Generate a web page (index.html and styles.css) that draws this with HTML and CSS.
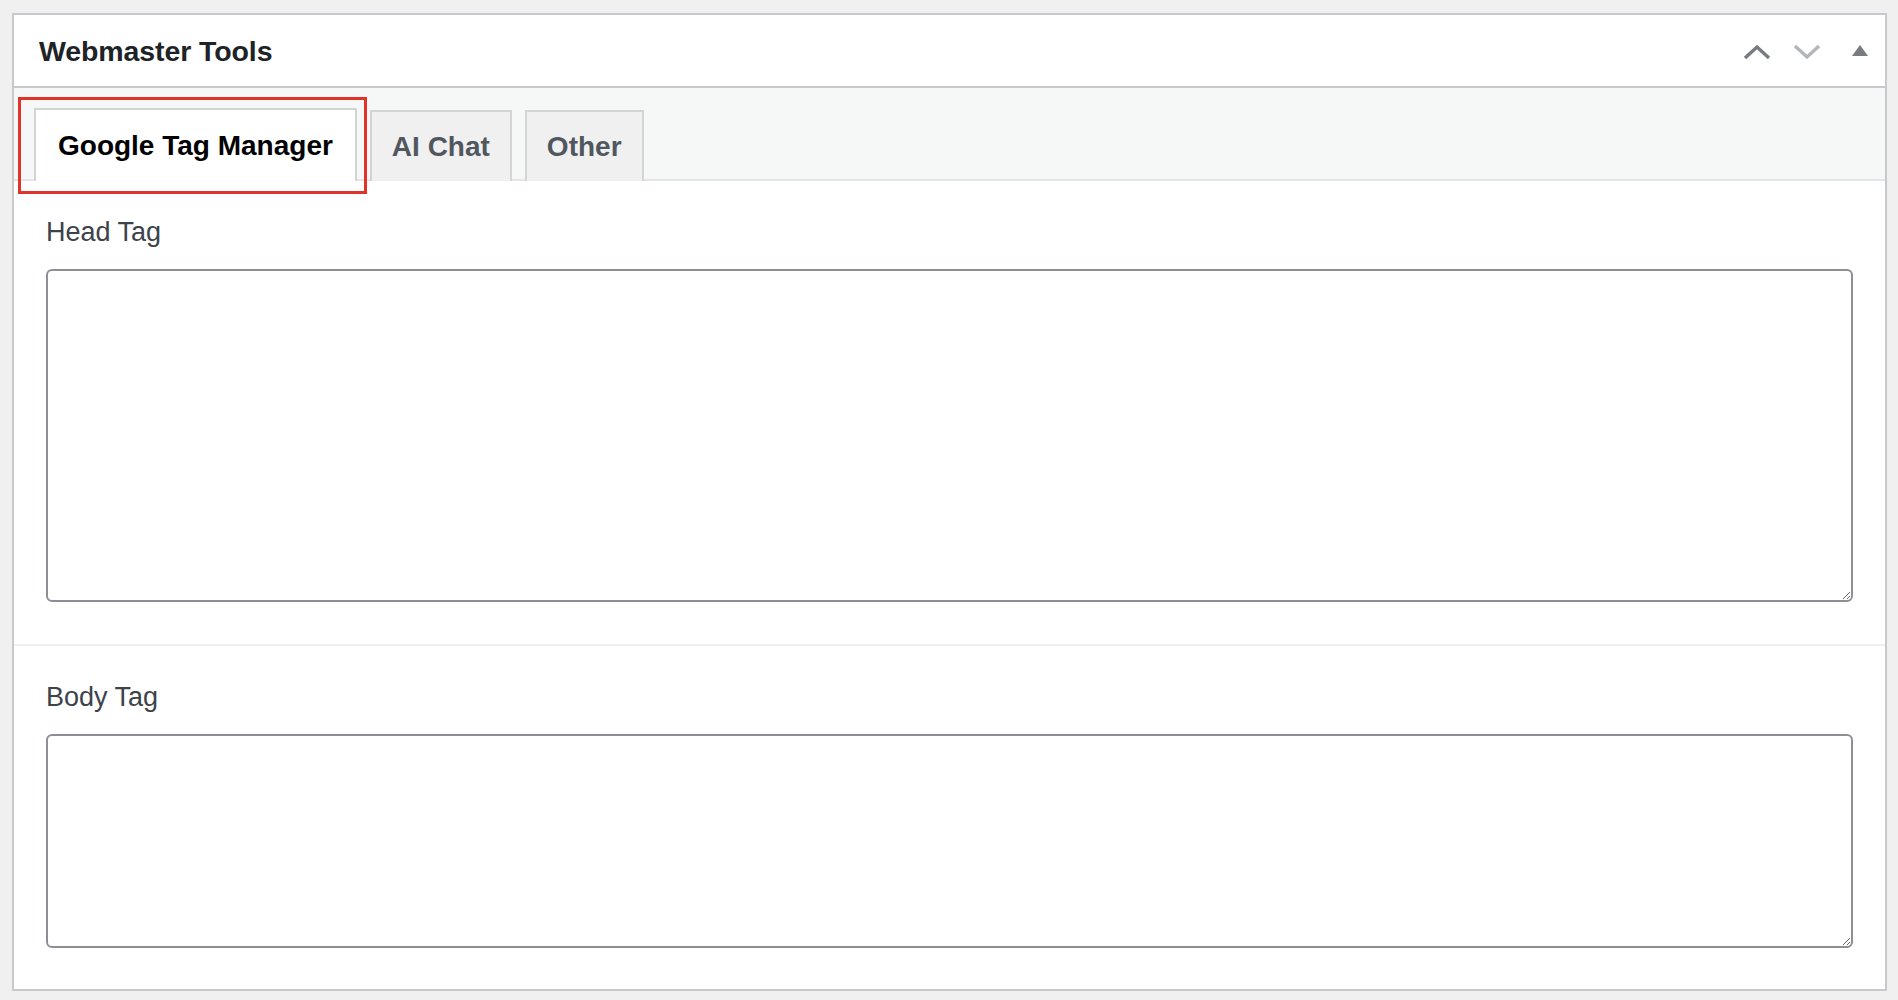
FILE: index.html
```html
<!DOCTYPE html>
<html lang="en">
<head>
    <meta charset="UTF-8">
    <meta name="viewport" content="width=device-width, initial-scale=1.0">
    <title>Webmaster Tools</title>
    <link rel="stylesheet" href="styles.css">
</head>
<body>
    <div class="postbox">
        <div class="postbox-header">
            <h2 class="postbox-title">Webmaster Tools</h2>
            <div class="handle-actions">
                <button class="handle-btn" type="button" aria-label="Move up">
                    <svg width="28" height="16" viewBox="0 0 28 16"><path d="M2 14 L14 3 L26 14" fill="none" stroke="#787c82" stroke-width="3.5"/></svg>
                </button>
                <button class="handle-btn" type="button" aria-label="Move down">
                    <svg width="28" height="16" viewBox="0 0 28 16"><path d="M2 2 L14 13 L26 2" fill="none" stroke="#b4b7ba" stroke-width="3.5"/></svg>
                </button>
                <button class="handle-btn toggle" type="button" aria-label="Toggle panel">
                    <svg width="16" height="11" viewBox="0 0 16 11"><path d="M8 0 L16 11 L0 11 Z" fill="#787c82"/></svg>
                </button>
            </div>
        </div>

        <div class="tab-bar">
            <div class="tab active">Google Tag Manager</div>
            <div class="tab">AI Chat</div>
            <div class="tab">Other</div>
            <!-- annotation drawn over the active tab -->
            <div class="highlight"></div>
        </div>

        <div class="field">
            <label for="headTag">Head Tag</label>
            <textarea id="headTag" class="code-box tall"></textarea>
        </div>

        <div class="field">
            <label for="bodyTag">Body Tag</label>
            <textarea id="bodyTag" class="code-box short"></textarea>
        </div>
    </div>
</body>
</html>
```

FILE: styles.css
```css
body {
    margin: 0;
    padding: 13px 11px 8px 12px;
    background-color: #f0f0f1;
    font-family: 'Liberation Sans', Arial, sans-serif;
}

.postbox {
    background-color: #fff;
    border: 2px solid #c8c9cc;
    height: 978px;
    box-sizing: border-box;
}

.postbox-header {
    display: flex;
    align-items: center;
    justify-content: space-between;
    height: 73px;
    box-sizing: border-box;
    border-bottom: 2px solid #c8c9cc;
    padding: 2px 17px 0 25px;
}

.postbox-title {
    margin: 0;
    font-size: 28.5px;
    font-weight: bold;
    color: #1d2327;
    letter-spacing: -0.1px;
}

.handle-actions {
    display: flex;
    align-items: center;
    gap: 22px;
}

.handle-btn {
    border: none;
    background: none;
    padding: 0;
    display: flex;
    align-items: center;
}

.handle-btn.toggle {
    margin-left: 9px;
    margin-bottom: 2px;
}

.tab-bar {
    position: relative;
    display: flex;
    gap: 13px;
    align-items: flex-end;
    background-color: #f6f7f7;
    border-bottom: 2px solid #e4e5e7;
    padding: 21px 0 0 20px;
    height: 93px;
    box-sizing: border-box;
}

.tab {
    height: 71px;
    box-sizing: border-box;
    display: flex;
    align-items: center;
    padding: 0 20px;
    margin-bottom: -2px;
    background-color: #f0f0f1;
    border: 2px solid #d3d4d6;
    border-bottom: none;
    font-size: 28px;
    font-weight: bold;
    color: #50575e;
}

.tab.active {
    background-color: #fff;
    color: #000;
    height: 73px;
    padding: 0 22px;
}

.highlight {
    position: absolute;
    left: 4px;
    top: 9px;
    width: 349px;
    height: 97px;
    box-sizing: border-box;
    border: 3px solid #e2332b;
    pointer-events: none;
}

.field {
    display: flex;
    flex-direction: column;
    padding: 35px 32px 42px 32px;
}

.field + .field {
    border-top: 2px solid #f0f0f1;
    padding-top: 35px;
}

label {
    font-size: 27px;
    line-height: 32px;
    color: #3c434a;
    margin-bottom: 21px;
}

.code-box {
    box-sizing: border-box;
    width: 100%;
    border: 2px solid #8c8f94;
    border-radius: 6px;
    background-color: #fff;
    font-family: 'Liberation Mono', monospace;
    font-size: 16px;
}

.code-box.tall {
    height: 333px;
}

.code-box.short {
    height: 214px;
}
```
